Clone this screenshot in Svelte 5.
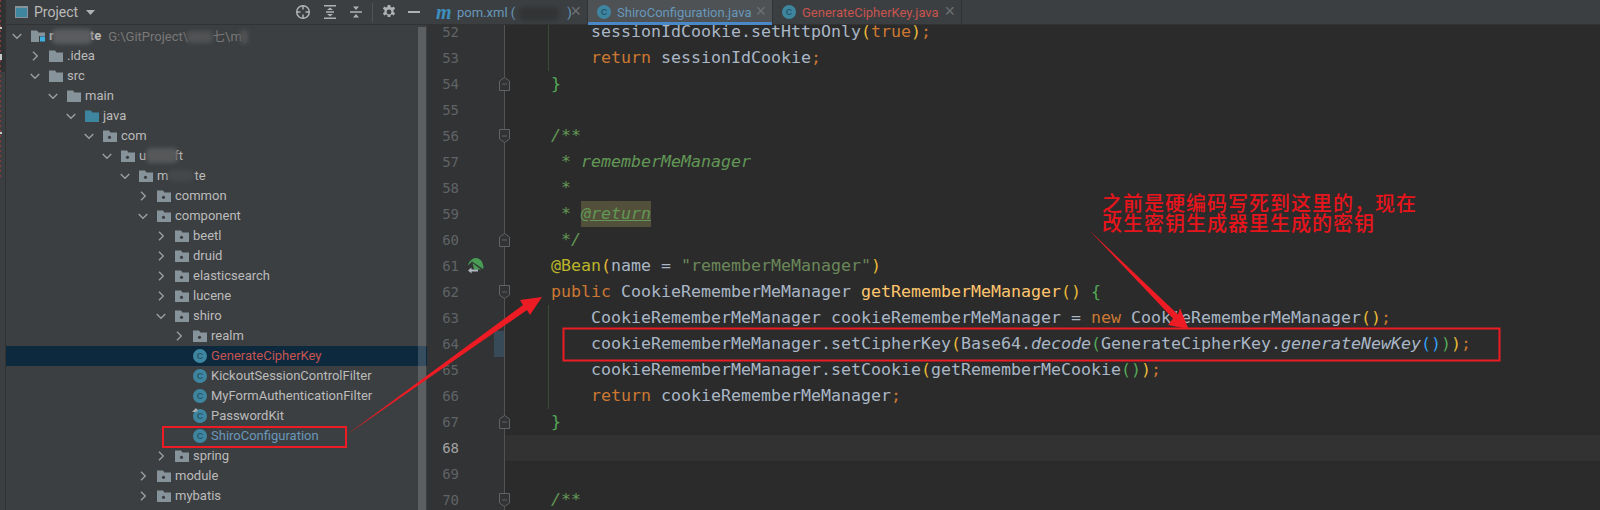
<script>
  // project tree, d = depth, kind picks the icon
  const tree = [
    { d: 0, kind: "root", open: true, name: "r", tail: "te", gap: 36, root: true },
    { d: 1, kind: "folder", open: false, name: ".idea" },
    { d: 1, kind: "folder", open: true, name: "src" },
    { d: 2, kind: "folder", open: true, name: "main" },
    { d: 3, kind: "java", open: true, name: "java" },
    { d: 4, kind: "pkg", open: true, name: "com" },
    { d: 5, kind: "pkg", open: true, name: "u", tail: "ft", gap: 28 },
    { d: 6, kind: "pkg", open: true, name: "m", tail: "te", gap: 26 },
    { d: 7, kind: "pkg", open: false, name: "common" },
    { d: 7, kind: "pkg", open: true, name: "component" },
    { d: 8, kind: "pkg", open: false, name: "beetl" },
    { d: 8, kind: "pkg", open: false, name: "druid" },
    { d: 8, kind: "pkg", open: false, name: "elasticsearch" },
    { d: 8, kind: "pkg", open: false, name: "lucene" },
    { d: 8, kind: "pkg", open: true, name: "shiro" },
    { d: 9, kind: "pkg", open: false, name: "realm" },
    { d: 9, kind: "class", name: "GenerateCipherKey", tone: "red", selected: true },
    { d: 9, kind: "class", name: "KickoutSessionControlFilter" },
    { d: 9, kind: "class", name: "MyFormAuthenticationFilter" },
    { d: 9, kind: "class", name: "PasswordKit", locked: true },
    { d: 9, kind: "class", name: "ShiroConfiguration", tone: "blue" },
    { d: 8, kind: "pkg", open: false, name: "spring" },
    { d: 7, kind: "pkg", open: false, name: "module" },
    { d: 7, kind: "pkg", open: false, name: "mybatis" },
  ];

  const t = (text, c = "id") => ({ text, c });

  const code = [
    { n: 52, guide: true, parts: [t("    sessionIdCookie.setHttpOnly"), t("(", "y"), t("true", "kw"), t(")", "y"), t(";", "kw")] },
    { n: 53, guide: true, parts: [t("    "), t("return", "kw"), t(" sessionIdCookie"), t(";", "kw")] },
    { n: 54, fold: "end", parts: [t("}", "g")] },
    { n: 55, parts: [] },
    { n: 56, fold: "start", parts: [t("/**", "cm")] },
    { n: 57, parts: [t(" * rememberMeManager", "cm")] },
    { n: 58, parts: [t(" *", "cm")] },
    { n: 59, parts: [t(" * ", "cm"), t("@return", "tag")] },
    { n: 60, fold: "end", parts: [t(" */", "cm")] },
    { n: 61, run: true, parts: [t("@Bean", "ann"), t("(", "y"), t("name = "), t('"rememberMeManager"', "str"), t(")", "y")] },
    { n: 62, fold: "start", parts: [t("public", "kw"), t(" CookieRememberMeManager "), t("getRememberMeManager", "fn"), t("()", "y"), t(" "), t("{", "g")] },
    { n: 63, guide: true, parts: [t("    CookieRememberMeManager cookieRememberMeManager = "), t("new", "kw"), t(" CookieRememberMeManager"), t("()", "y"), t(";", "kw")] },
    { n: 64, guide: true, changed: true, parts: [t("    cookieRememberMeManager.setCipherKey"), t("(", "y"), t("Base64."), t("decode", "it"), t("(", "g"), t("GenerateCipherKey."), t("generateNewKey", "it"), t("()", "b"), t(")", "g"), t(")", "y"), t(";", "kw")] },
    { n: 65, guide: true, parts: [t("    cookieRememberMeManager.setCookie"), t("(", "y"), t("getRememberMeCookie"), t("()", "g"), t(")", "y"), t(";", "kw")] },
    { n: 66, guide: true, parts: [t("    "), t("return", "kw"), t(" cookieRememberMeManager"), t(";", "kw")] },
    { n: 67, fold: "end", parts: [t("}", "g")] },
    { n: 68, current: true, parts: [] },
    { n: 69, parts: [] },
    { n: 70, fold: "start", parts: [t("/**", "cm")] },
  ];
</script>

<div class="page">
  <div class="strip"></div>

  <aside class="project">
    <header class="panel-head">
      <span class="window-icon"></span>
      <span class="panel-title">Project</span>
      <svg class="caret" width="9" height="5" viewBox="0 0 9 5"><path d="M0 0h9L4.500 5z" fill="#afb1b3" /></svg>
      <div class="tools">
        <svg width="16" height="16" viewBox="0 0 16 16" fill="none" stroke="#afb1b3" stroke-width="1.500">
          <circle cx="8" cy="8" r="6.300" />
          <path d="M8 1v4.500M8 10.500V15M1 8h4.500M10.500 8H15" />
        </svg>
        <svg width="14" height="16" viewBox="0 0 14 16" fill="#afb1b3">
          <path d="M1 1h12v1.500H1zM1 13.500h12V15H1zM7 3.500l3 2.500H4zM7 12.500l-3-2.500h6zM3 7.300h8v1.400H3z" />
        </svg>
        <svg width="14" height="16" viewBox="0 0 14 16" fill="#afb1b3">
          <path d="M1 7.300h12v1.400H1zM7 6L4 2.500h6zM7 10l3 3.500H4z" />
        </svg>
        <span class="tool-sep"></span>
        <svg width="14" height="14" viewBox="0 0 14 14" fill="#afb1b3">
          <path fill-rule="evenodd" d="M5.700 0h2.600l.4 2 1.300.6 1.800-1 1.300 2.200-1.600 1.300v1.800l1.600 1.300-1.300 2.200-1.800-1-1.300.6-.4 2H5.700l-.4-2-1.300-.6-1.800 1L.9 8.200l1.600-1.300V5.100L.9 3.800l1.300-2.200 1.800 1 1.300-.6zM7 4.600a2.400 2.400 0 1 0 0 4.800 2.400 2.400 0 0 0 0-4.800z" />
        </svg>
        <span class="minimize"></span>
      </div>
    </header>

    <div class="tree">
      {#each tree as row}
        <div class="row" class:selected={row.selected} style="padding-left: {4 + row.d * 18}px">
          <span class="chevron">
            {#if row.open === true}
              <svg width="10" height="7" viewBox="0 0 10 7" fill="none" stroke="#9da0a2" stroke-width="1.300"><path d="M.7 1l4.300 4.300L9.300 1" /></svg>
            {:else if row.open === false}
              <svg width="7" height="10" viewBox="0 0 7 10" fill="none" stroke="#9da0a2" stroke-width="1.300"><path d="M1 .7l4.300 4.300L1 9.300" /></svg>
            {/if}
          </span>

          {#if row.kind === "class"}
            <span class="class-icon">C
              {#if row.locked}
                <svg class="lock" width="6" height="6" viewBox="0 0 6 6"><path d="M0 4L4 0l2 3-3 1z" fill="#a9adb0" /></svg>
              {/if}
            </span>
          {:else}
            <svg class="folder" width="14" height="12" viewBox="0 0 14 12">
              <path d="M0 .5h6l1.400 2H14V12H0z" fill={row.kind === "java" ? "#3e86a0" : "#87939a"} />
              {#if row.kind === "pkg"}<circle cx="6.500" cy="7.300" r="1.600" fill="#3c3f41" />{/if}
              {#if row.kind === "root"}<rect x="8" y="6" width="7" height="6" fill="#3c3f41" /><rect x="9" y="6.500" width="5" height="5" fill="#3daee0" />{/if}
            </svg>
          {/if}

          <span class="name {row.tone || ''}" class:bold={row.root}>{row.name}{#if row.gap}<i class="gap" style="width: {row.gap}px"></i>{row.tail}{/if}</span>
          {#if row.root}
            <span class="path">G:\GitProject\<i class="gap path-a"></i>七\m<i class="gap path-b"></i></span>
          {/if}
        </div>
      {/each}
    </div>

    <div class="scrollbar"></div>
  </aside>

  <main class="editor">
    <nav class="tabs">
      <div class="tab first">
        <span class="maven">m</span>
        <span class="tab-name blue">pom.xml (<i class="gap pom-gap"></i>)</span>
        <span class="close">×</span>
      </div>
      <div class="tab active">
        <span class="class-icon">C</span>
        <span class="tab-name blue">ShiroConfiguration.java</span>
        <span class="close">×</span>
      </div>
      <div class="tab">
        <span class="class-icon">C</span>
        <span class="tab-name red">GenerateCipherKey.java</span>
        <span class="close">×</span>
      </div>
    </nav>

    <div class="code">
      <div class="lines">
        {#each code as line}
          <div class="line" class:current={line.current}>
            <div class="num">{line.n}</div>
            <div class="gutter">
              {#if line.run}
                <svg class="run" width="17" height="16" viewBox="0 0 17 16">
                  <path d="M1 7.500C2 2.500 6 0 9 0c4 0 7 3.500 7.500 9.500L16 11 5 3.500z" fill="#499c54" />
                  <path d="M5.500 5l8.500 6.500H7z" fill="#499c54" />
                  <path d="M1 12.500l3.500-3v2H11v2H4.500v2z" fill="#afb8c0" />
                </svg>
              {/if}
              {#if line.changed}<span class="changed"></span>{/if}
              {#if line.fold}
                <svg class="fold" width="11" height="14" viewBox="0 0 11 14" fill="#313335" stroke="#606366">
                  {#if line.fold === "start"}
                    <path d="M.5.500h10v9.500l-5 3.500-5-3.500z" />
                  {:else}
                    <path d="M.5 13.500V4l5-3.500 5 3.500v9.500z" />
                  {/if}
                  <path d="M3 7h5" />
                </svg>
              {/if}
            </div>
            <div class="text" class:guide={line.guide}>{#each line.parts as p}<span class={p.c}>{p.text}</span>{/each}</div>
          </div>
        {/each}
      </div>
    </div>
  </main>

  <!-- blurred-out bits of the screenshot -->
  <div class="blot" style="left: 52px; top: 29px; width: 40px; height: 15px; background: #5a5c5f"></div>
  <div class="blot" style="left: 186px; top: 31px; width: 27px; height: 12px; background: #505254"></div>
  <div class="blot" style="left: 240px; top: 30px; width: 8px; height: 14px; background: #505254"></div>
  <div class="blot" style="left: 146px; top: 148px; width: 32px; height: 15px; background: #56585a"></div>
  <div class="blot" style="left: 168px; top: 170px; width: 26px; height: 11px; background: #45484a"></div>
  <div class="blot" style="left: 519px; top: 7px; width: 40px; height: 14px; background: #323436"></div>

  <!-- red annotations drawn over the capture -->
  <svg class="marks" width="1600" height="510" viewBox="0 0 1600 510">
    <g fill="none" stroke="#ed1c24" stroke-width="2">
      <rect x="163" y="427" width="183" height="20" />
      <rect x="563.500" y="328.500" width="936" height="32" />
    </g>
    <g fill="#ed1c24">
      <path d="M345 436L523 305 520 300 542 297 530 315 527 310z" />
      <path d="M1089 230L1178 314.500 1180 308 1188.500 329 1168 325 1173 318.500z" />
    </g>
  </svg>
  <div class="note">之前是硬编码写死到这里的，现在<br />改生密钥生成器里生成的密钥</div>
</div>

<style>
  :global(body) {
    margin: 0;
    background: #2b2b2b;
  }

  .page {
    position: relative;
    display: flex;
    width: 1600px;
    height: 510px;
    overflow: hidden;
    font-family: Roboto, "Open Sans", "Noto Sans CJK SC", sans-serif;
    font-size: 13px;
    color: #bbbbbb;
  }

  .strip {
    flex: none;
    width: 5px;
    border-right: 1px solid #323232;
    background:
      linear-gradient(#c8cacc, #c8cacc) 0 27px / 2px 2px no-repeat,
      linear-gradient(#c8cacc, #c8cacc) 0 54px / 2px 6px no-repeat,
      linear-gradient(#c8cacc, #c8cacc) 0 132px / 2px 2px no-repeat,
      repeating-linear-gradient(#8c3a3a 0 2px, transparent 2px 5px) 0 0 / 1px 180px no-repeat,
      linear-gradient(#2f3133 0 72px, #3c3f41 72px);
  }

  .project {
    position: relative;
    flex: none;
    width: 421px;
    background: #3c3f41;
  }

  .panel-head {
    display: flex;
    align-items: center;
    height: 25px;
    padding-left: 9px;
    box-sizing: border-box;
    border-bottom: 1px solid #323232;
  }

  .window-icon {
    width: 11px;
    height: 9px;
    border: 1.500px solid #87939a;
    border-top-width: 2px;
    background: #3e86a0;
  }

  .panel-title {
    margin-left: 6px;
    font-size: 14px;
  }

  .caret {
    margin-left: 8px;
  }

  .tools {
    position: absolute;
    left: 289px;
    top: 4px;
    display: flex;
    align-items: center;
    gap: 12px;
    height: 16px;
  }

  .tool-sep {
    width: 1px;
    height: 19px;
    margin: 0 -3px;
    background: #515355;
  }

  .minimize {
    width: 12px;
    height: 2px;
    background: #afb1b3;
  }

  .tree {
    padding-top: 1px;
  }

  .row {
    display: flex;
    align-items: center;
    height: 20px;
    white-space: nowrap;
  }

  .row.selected {
    background: #0d293e;
  }

  .chevron {
    display: flex;
    flex: none;
    align-items: center;
    justify-content: center;
    width: 14px;
    margin-right: 7px;
  }

  .folder {
    flex: none;
    margin-right: 4px;
  }

  .class-icon {
    position: relative;
    display: flex;
    flex: none;
    align-items: center;
    justify-content: center;
    width: 14px;
    height: 14px;
    margin-right: 4px;
    border-radius: 50%;
    background: #3e86a0;
    color: #28566a;
    font-family: "Liberation Sans", sans-serif;
    font-size: 9px;
    font-weight: 700;
    line-height: 14px;
  }

  .lock {
    position: absolute;
    left: -1px;
    top: -1px;
  }

  .name,
  .path {
    padding-bottom: 2px;
  }

  .name.bold {
    font-weight: 700;
  }

  .red {
    color: #c75450;
  }

  .blue {
    color: #6897bb;
  }

  .path {
    margin-left: 7px;
    color: #787878;
  }

  .gap {
    display: inline-block;
  }

  .path-a {
    width: 24px;
  }

  .path-b {
    width: 30px;
  }

  .scrollbar {
    position: absolute;
    right: 1px;
    top: 27px;
    bottom: 0;
    width: 8px;
    background: rgba(255, 255, 255, 0.17);
  }

  .editor {
    flex: 1;
    min-width: 0;
  }

  .tabs {
    display: flex;
    height: 25px;
    box-sizing: border-box;
    border-bottom: 1px solid #323232;
    background: #3c3f41;
  }

  .tab {
    position: relative;
    display: flex;
    align-items: center;
    flex: none;
    width: 189px;
    padding-left: 9px;
    box-sizing: border-box;
    border-right: 1px solid #323232;
  }

  .tab.first {
    width: 161px;
  }

  .tab.active {
    width: 185px;
    background: #4e5254;
  }

  .tab.active::after {
    content: "";
    position: absolute;
    left: 0;
    right: 0;
    bottom: -1px;
    height: 3px;
    background: #4a88c7;
  }

  .tab .class-icon {
    margin-right: 6px;
  }

  .maven {
    width: 16px;
    margin-right: 5px;
    color: #3d8fc0;
    font-family: "Liberation Serif", serif;
    font-size: 20px;
    font-style: italic;
    font-weight: 700;
    line-height: 20px;
  }

  .pom-gap {
    width: 52px;
  }

  .close {
    position: absolute;
    right: 6px;
    top: 1px;
    color: #6e7072;
    font-family: "Liberation Sans", sans-serif;
    font-size: 18px;
    line-height: 20px;
  }

  .code {
    position: relative;
    z-index: 0;
    height: 485px;
    overflow: hidden;
    font-family: "DejaVu Sans Mono", monospace;
    font-size: 16.610px;
  }

  .lines {
    margin-top: -6px;
  }

  .line {
    display: flex;
    height: 26px;
    line-height: 26px;
  }

  .num {
    flex: none;
    width: 32px;
    background: #313335;
    color: #606366;
    font-size: 14px;
    text-align: right;
  }

  .current .num {
    color: #a4a3a3;
  }

  .gutter {
    position: relative;
    z-index: 1;
    flex: none;
    width: 46px;
    border-right: 1px solid #515355;
    box-sizing: border-box;
    background: #313335;
  }

  .run {
    position: absolute;
    left: 8px;
    top: 5px;
  }

  .changed {
    position: absolute;
    right: 0;
    top: 0;
    width: 10px;
    height: 26px;
    background: #374a57;
  }

  .fold {
    position: absolute;
    right: -6px;
    top: 6px;
  }

  .text {
    position: relative;
    flex: 1;
    padding-left: 46px;
    background: #2b2b2b;
    color: #a9b7c6;
    white-space: pre;
  }

  .current .text {
    background: #323232;
  }

  .guide::before {
    content: "";
    position: absolute;
    left: 43px;
    top: 0;
    bottom: 0;
    width: 1px;
    background: #3b4a3b;
  }

  .kw {
    color: #cc7832;
  }

  .id {
    color: #a9b7c6;
  }

  .fn {
    color: #ffc66d;
  }

  .str {
    color: #6a8759;
  }

  .ann {
    color: #bbb529;
  }

  .y {
    color: #e8ba36;
  }

  .g {
    color: #54a857;
  }

  .b {
    color: #359ff4;
  }

  .it {
    color: #a9b7c6;
    font-style: italic;
  }

  .cm {
    color: #629755;
    font-style: italic;
  }

  .tag {
    display: inline-block;
    background: #52503a;
    color: #629755;
    font-style: italic;
    text-decoration: underline;
  }

  .blot {
    position: absolute;
    border-radius: 5px;
    filter: blur(2px);
  }

  .marks {
    position: absolute;
    left: 0;
    top: 0;
    pointer-events: none;
  }

  .note {
    position: absolute;
    left: 1102px;
    top: 193px;
    color: #e8141c;
    font-family: "Noto Sans CJK SC", sans-serif;
    font-size: 20px;
    font-weight: 500;
    letter-spacing: 1px;
    line-height: 20px;
    white-space: nowrap;
  }
</style>
